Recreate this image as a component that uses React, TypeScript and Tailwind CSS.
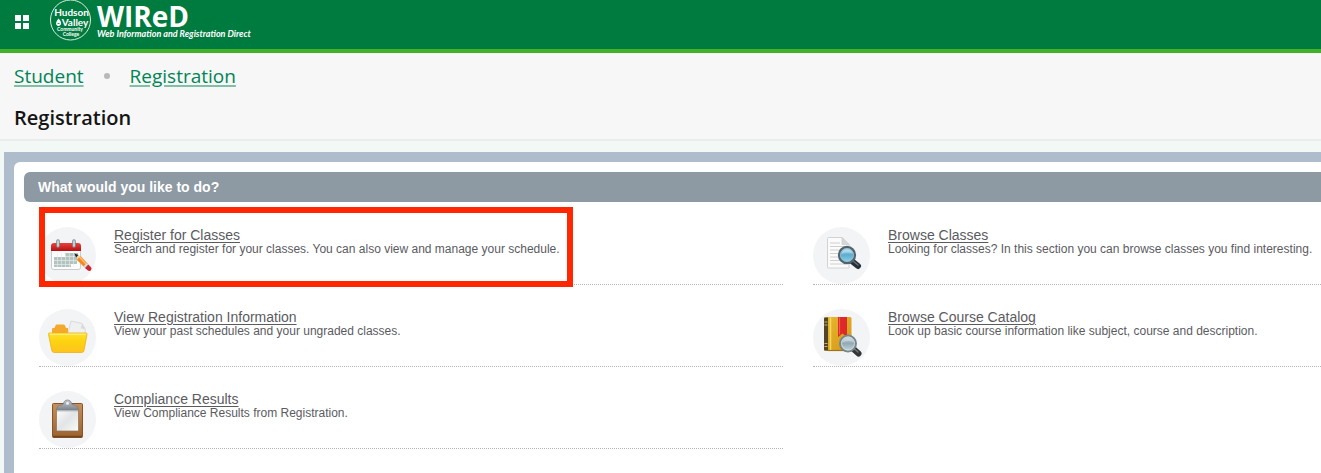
import type { ReactNode } from "react";

function CalendarIcon() {
  return (
    <svg viewBox="0 0 57 57" className="size-full" aria-hidden="true">
      <defs>
        <linearGradient id="calRed" x1="0" y1="0" x2="0" y2="1">
          <stop offset="0" stopColor="#e8423c" />
          <stop offset="1" stopColor="#b80f12" />
        </linearGradient>
      </defs>
      <rect x="12.5" y="18" width="29" height="24.5" rx="2" fill="#fdfdfd" stroke="#c9cccd" />
      <path d="M12 24v-5a3 3 0 0 1 3-3h24a3 3 0 0 1 3 3v5z" fill="url(#calRed)" />
      <g fill="#b3c3c0">
        <path d="M26 26h13v3.500H26zM15 30h24v3.500H15zM15 34h23v3H15zM15 37.500h17v2.500H15z" />
      </g>
      <path d="M18.500 26v14M22.500 26v14M26.500 26v14M30.500 26v14M34.500 26v14" stroke="#e6ebea" strokeWidth=".6" />
      <g stroke="#7b8d94" strokeWidth="3.600" strokeLinecap="round">
        <path d="M19 14v5M35 14v5" />
      </g>
      <g stroke="#dce5e8" strokeWidth="1.500" strokeLinecap="round">
        <path d="M19 14v5M35 14v5" />
      </g>
      <path d="M38 28.500l4 1 7 7.500-3.500 3.500-7-7z" fill="#f58a23" />
      <path d="M40 29.500l7.500 8" stroke="#ffc074" strokeWidth="1.200" />
      <path d="M36.500 27.200l5 2-3.200 3z" fill="#f3d6a8" />
      <path d="M35.500 26.500l4 1.500-2.500 2.500z" fill="#222" />
      <path d="M47.800 36l1.700 1.700-3.400 3.400-1.700-1.700z" fill="#d5dadd" />
      <path d="M49.300 37.500l2.500 2.500a1.500 1.500 0 0 1-3.200 3.300L46 40.900z" fill="#cf2530" />
    </svg>
  );
}

function FolderIcon() {
  return (
    <svg viewBox="0 0 57 57" className="size-full" aria-hidden="true">
      <defs>
        <linearGradient id="folderFront" x1="0" y1="0" x2="0" y2="1">
          <stop offset="0" stopColor="#ffe32e" />
          <stop offset=".4" stopColor="#fcd410" />
          <stop offset="1" stopColor="#ffc21e" />
        </linearGradient>
      </defs>
      <path d="M13 27v-7q0-1 1-1h1.500l1-2.500q.5-1 1.500-1h6.500q1 0 1.500 1L27 19h2v9z" fill="#f5a92c" />
      <path d="M32 12l11 2.500 3.500 6L45 28H28z" fill="#eff0f0" stroke="#d2d4d5" strokeWidth=".8" />
      <path d="M43 14.500l-1.200 4.800 4.700 1.200z" fill="#d8dadb" />
      <path d="M10.500 24h36.500q1.300 0 1 1.300L45 41.500q-.4 2-2.400 2H15.200q-2 0-2.400-2L9.500 25.300Q9.300 24 10.500 24z" fill="url(#folderFront)" stroke="#edae17" strokeWidth=".8" />
      <path d="M10.800 25.200h36" stroke="#fff08b" />
    </svg>
  );
}

function ClipboardIcon() {
  return (
    <svg viewBox="0 0 57 57" className="size-full" aria-hidden="true">
      <defs>
        <linearGradient id="clipWood" x1="0" y1="0" x2="0" y2="1">
          <stop offset="0" stopColor="#c98f5b" />
          <stop offset="1" stopColor="#9b622f" />
        </linearGradient>
        <linearGradient id="clipPaper" x1="0" y1="0" x2="1" y2="1">
          <stop offset="0" stopColor="#ffffff" />
          <stop offset=".5" stopColor="#e2e5e5" />
          <stop offset="1" stopColor="#fafafa" />
        </linearGradient>
        <linearGradient id="clipMetal" x1="0" y1="0" x2="0" y2="1">
          <stop offset="0" stopColor="#c1c7cc" />
          <stop offset="1" stopColor="#7c858c" />
        </linearGradient>
      </defs>
      <rect x="13.500" y="12.500" width="30" height="34" rx="1" fill="url(#clipWood)" stroke="#875329" />
      <path d="M14 45.500h29" stroke="#75441f" strokeWidth="1.500" />
      <rect x="17.500" y="18" width="22" height="22" fill="url(#clipPaper)" stroke="#8c7058" strokeWidth=".7" />
      <path d="M18 20h21" stroke="#babfc0" />
      <path d="M18 19v-1.500q0-2.500 2.500-3l3.500-1q1-4.500 4.500-4.500t4.500 4.500l3.500 1q2.500.5 2.500 3V19z" fill="url(#clipMetal)" stroke="#757e85" strokeWidth=".7" />
      <circle cx="28.500" cy="12.300" r="1.500" fill="#eceff0" />
    </svg>
  );
}

function DocumentSearchIcon() {
  return (
    <svg viewBox="0 0 57 57" className="size-full" aria-hidden="true">
      <defs>
        <linearGradient id="lensBlue" x1="0" y1="0" x2="0" y2="1">
          <stop offset="0" stopColor="#b1dced" />
          <stop offset=".5" stopColor="#5caed0" />
          <stop offset="1" stopColor="#8dd8ed" />
        </linearGradient>
      </defs>
      <path d="M15.500 10.500h13.500l7 7V41H15.500q-1 0-1-1V11.500q0-1 1-1z" fill="#fbfbfb" stroke="#d0d2d3" />
      <path d="M29 10.500V17.500h7z" fill="#d7d8d9" stroke="#c6c8c9" strokeWidth=".6" />
      <path d="M17 16h10M17 19.500h16M17 23h12M17 26.500h10M17 30h10M17 33.500h12M17 37h16" stroke="#cdd0d1" />
      <path d="M40 35l5 4" stroke="#263038" strokeWidth="6" strokeLinecap="round" />
      <path d="M40 34l5 4" stroke="#647079" strokeWidth="1.500" strokeLinecap="round" />
      <circle cx="34" cy="28" r="8" fill="url(#lensBlue)" stroke="#50636f" strokeWidth="2.300" />
      <circle cx="34" cy="28" r="6.600" fill="none" stroke="#a9bdc6" strokeWidth=".7" />
      <path d="M28.500 27q1-4.500 5.500-4.500t5.500 4q-5-2-11 .5z" fill="#fff" opacity=".35" />
    </svg>
  );
}

function BookSearchIcon() {
  return (
    <svg viewBox="0 0 57 57" className="size-full" aria-hidden="true">
      <defs>
        <linearGradient id="bookGold" x1="0" y1="0" x2="1" y2="1">
          <stop offset="0" stopColor="#e9b930" />
          <stop offset="1" stopColor="#d39616" />
        </linearGradient>
        <linearGradient id="lensGray" x1="0" y1="0" x2="0" y2="1">
          <stop offset="0" stopColor="#cbd9dc" />
          <stop offset=".5" stopColor="#93abb5" />
          <stop offset="1" stopColor="#c6d9de" />
        </linearGradient>
      </defs>
      <rect x="11" y="8" width="27.500" height="34" rx="1.500" fill="url(#bookGold)" />
      <path d="M12 8.500h3v33h-3q-1 0-1-1V9.500q0-1 1-1z" fill="#514527" />
      <path d="M11.500 13h3M11.500 16h3M11.500 34.500h3M11.500 37.500h3" stroke="#d3b160" />
      <path d="M17.500 8.500v33" stroke="#f7d861" strokeWidth="1.500" />
      <path d="M15 41.500h20" stroke="#9f721d" strokeWidth="1.200" />
      <path d="M25 8h9V28l-4.500-3.500L25 28z" fill="#dd2927" />
      <path d="M26.500 8.500v17" stroke="#f15a4e" strokeWidth="1.200" />
      <path d="M41 40.500l4.500 4" stroke="#333536" strokeWidth="6" strokeLinecap="round" />
      <path d="M41 39.500l4 3.500" stroke="#75797b" strokeWidth="1.300" strokeLinecap="round" />
      <circle cx="35" cy="34.500" r="8" fill="url(#lensGray)" stroke="#77868c" strokeWidth="2" />
      <circle cx="35" cy="34.500" r="6.500" fill="none" stroke="#d8e1e3" strokeWidth=".8" />
      <path d="M29.500 33.500q1-4.500 5.500-4.500t5.500 4q-5-2-11 .5z" fill="#fff" opacity=".3" />
    </svg>
  );
}

type TaskProps = {
  title: string;
  description: string;
  icon: ReactNode;
  highlighted?: boolean;
};

function Task({ title, description, icon, highlighted }: TaskProps) {
  return (
    <li className="relative flex gap-[18px] border-b border-dotted border-[#b5b5b5] pt-6">
      <div className="size-[57px] shrink-0 rounded-full bg-[#f2f4f6]">{icon}</div>
      <div className="whitespace-nowrap text-[#5b5b5f]">
        <a href="#" className="block w-fit text-[14px] leading-4 underline underline-offset-2">
          {title}
        </a>
        <p className="text-[12px] leading-[13px]">{description}</p>
      </div>
      {highlighted && (
        <div className="pointer-events-none absolute top-1 left-0 h-20 w-[534px] border-6 border-[#ff2600]" />
      )}
    </li>
  );
}

export default function App() {
  return (
    <div className="flex min-h-screen flex-col bg-[#f1f8f6] font-['Liberation_Sans',Arial,sans-serif]">
      <header className="flex h-[53px] items-start border-b-4 border-[#43b02a] bg-[#007b40] pl-[15px] font-['Open_Sans',sans-serif] text-white">
        <button type="button" aria-label="Menu" className="mt-[15px] grid grid-cols-2 gap-[2px]">
          <span className="size-[6px] bg-white" />
          <span className="size-[6px] bg-white" />
          <span className="size-[6px] bg-white" />
          <span className="size-[6px] bg-white" />
        </button>
        <a href="#" className="ml-[21px] flex gap-[5px]">
          <svg viewBox="0 0 42 42" className="size-[42px]" role="img" aria-label="Hudson Valley Community College">
            <circle cx="20.500" cy="20" r="20" fill="none" stroke="#d7eadf" strokeWidth="1" />
            <g fill="#fff" textAnchor="middle" fontFamily="Lato, sans-serif" fontWeight="700">
              <text x="21.500" y="16" fontSize="10">Hudson</text>
              <text x="25" y="26" fontSize="10">Valley</text>
              <text x="20" y="31" fontSize="5">Community</text>
              <text x="21" y="36" fontSize="5">College</text>
            </g>
            <path d="M8.500 18.500q4 4 2 6.500-2 2-4 0-1.500-2.500 2-6.500z" fill="#fff" />
            <path d="M7.500 23.500h2" stroke="#007b40" strokeWidth=".8" />
          </svg>
          <span className="flex flex-col whitespace-nowrap">
            <span className="text-[28px] leading-8 font-bold">WIReD</span>
            <span className="font-['Lato',sans-serif] text-[9px] leading-1 font-bold italic">
              Web Information and Registration Direct
            </span>
          </span>
        </a>
      </header>

      <div className="border-b-2 border-[#ececec] bg-[#f7f7f7] px-[14px] pt-[9px] pb-[7px] font-['Open_Sans',sans-serif]">
        <nav aria-label="Breadcrumb" className="flex items-center text-[19px] leading-7 text-[#008556]">
          <a href="#" className="underline decoration-[#7fc0a7] decoration-2 underline-offset-2">Student</a>
          <span className="mx-5 size-[6px] rounded-full bg-[#b8b8b8]" />
          <a href="#" className="underline decoration-[#7fc0a7] decoration-2 underline-offset-2">Registration</a>
        </nav>
        <h1 className="mt-[14px] text-[20px] leading-7 font-semibold text-[#151515]">Registration</h1>
      </div>

      <main className="mt-[11px] ml-1 flex grow flex-col bg-[#aebccb] pt-[10px] pl-[10px]">
        <section className="grow rounded-tl-md bg-white pt-[10px] pl-[10px]">
          <h2 className="rounded-l-md bg-[#8d99a3] pl-[14px] text-[14px] leading-[30px] font-bold text-white">
            What would you like to do?
          </h2>
          <div className="mt-px ml-[15px] grid grid-cols-[744fr_508fr] gap-[30px]">
            <ul className="min-w-0">
              <Task
                title="Register for Classes"
                description="Search and register for your classes. You can also view and manage your schedule."
                icon={<CalendarIcon />}
                highlighted
              />
              <Task
                title="View Registration Information"
                description="View your past schedules and your ungraded classes."
                icon={<FolderIcon />}
              />
              <Task
                title="Compliance Results"
                description="View Compliance Results from Registration."
                icon={<ClipboardIcon />}
              />
            </ul>
            <ul className="min-w-0">
              <Task
                title="Browse Classes"
                description="Looking for classes? In this section you can browse classes you find interesting."
                icon={<DocumentSearchIcon />}
              />
              <Task
                title="Browse Course Catalog"
                description="Look up basic course information like subject, course and description."
                icon={<BookSearchIcon />}
              />
            </ul>
          </div>
        </section>
      </main>
    </div>
  );
}
